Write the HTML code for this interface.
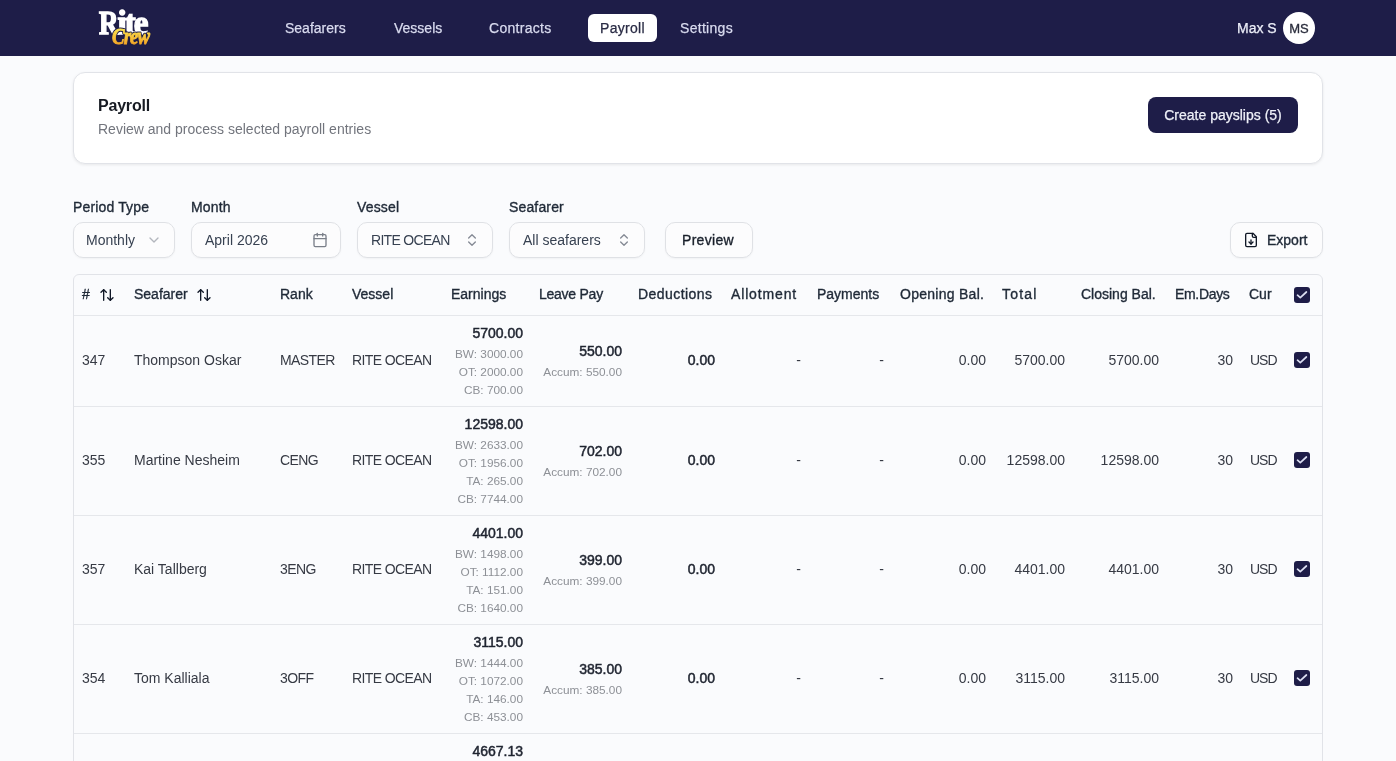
<!DOCTYPE html>
<html><head><meta charset="utf-8">
<style>
*{box-sizing:border-box;margin:0;padding:0}
html,body{width:1396px;height:761px;overflow:hidden;background:#fafbfd;-webkit-font-smoothing:antialiased;font-family:"Liberation Sans",sans-serif;color:#1f2937}
svg{display:block}
.nav{position:absolute;left:0;top:0;width:1396px;height:56px;background:#1e1d48}
.logo{position:absolute;left:96px;top:6px}
.ni{position:absolute;top:14px;height:28px;line-height:28px;font-size:14px;color:#d9dbef;-webkit-text-stroke:0.25px currentColor;padding:0 12px;border-radius:6px}
.ni.act{background:#fff;color:#2a2c45}
.user{position:absolute;left:1237px;top:19px;font-size:14px;color:#eceef8;-webkit-text-stroke:0.25px currentColor;line-height:18px}
.av{position:absolute;left:1283px;top:12px;width:32px;height:32px;border-radius:50%;background:#fff;color:#2a2d3c;font-size:13px;text-align:center;line-height:33px;-webkit-text-stroke:0.3px currentColor}
.card{position:absolute;left:73px;top:72px;width:1250px;height:92px;background:#fff;border:1px solid #e1e3e8;border-radius:12px;box-shadow:0 1px 3px rgba(0,0,0,.08)}
.ttl{position:absolute;left:98px;top:97px;font-size:16px;font-weight:bold;color:#161a22;letter-spacing:-0.2px;line-height:18px}
.sub{position:absolute;left:98px;top:120px;font-size:14px;color:#72757d;line-height:18px}
.btn{position:absolute;left:1148px;top:97px;width:150px;height:36px;background:#1e1d48;color:#eef0f8;-webkit-text-stroke:0.25px currentColor;border-radius:8px;font-size:14px;text-align:center;line-height:36px}
.lbl{position:absolute;top:199px;font-size:14px;color:#1f2937;letter-spacing:0.15px;line-height:16px;-webkit-text-stroke:0.35px #1f2937}
.sel{position:absolute;top:222px;height:36px;border:1px solid #dfe1e5;border-radius:10px;background:#fcfcfd;box-shadow:0 1px 2px rgba(0,0,0,.04);font-size:14px;color:#374151;line-height:34px}
.sel svg{position:absolute}
.tbl{position:absolute;left:73px;top:274px;width:1250px;height:520px;border:1px solid #e1e3e8;border-radius:6px;background:#fafbfd;overflow:hidden}
table{border-collapse:collapse;table-layout:fixed;width:1248px}
th{height:40px;text-align:left;font-weight:normal;font-size:14px;line-height:16px;color:#1f2937;padding:11px 8px 0;vertical-align:top;border-bottom:1px solid #e5e7eb;white-space:nowrap;-webkit-text-stroke:0.35px #1f2937}
th svg{display:inline-block;vertical-align:top;margin-top:1px}
th .cb{margin-top:1px}
td .cb{top:-1px}
th .cb svg{margin-top:0}
td{font-size:14px;color:#363a44;padding:0 8px;border-bottom:1px solid #e5e7eb;white-space:nowrap;vertical-align:middle}
td>span.t{position:relative;top:-1px}
.u{letter-spacing:-0.6px}
td.r{text-align:right}
.b{font-weight:normal;-webkit-text-stroke:0.5px currentColor;color:#1f2430;line-height:20px}
td.r>div.b{position:relative;top:-0.5px}
td.r>div.sm{position:relative;top:1px}
.sm{font-size:11.8px;color:#8d9096;line-height:18px}
.cb{display:block;width:16px;height:16px;border-radius:3px;background:#1e1d48;position:relative;margin-left:1px}
.cb svg{position:absolute;left:0;top:0}
</style></head><body><div style="position:absolute;left:0;top:0;width:1396px;height:761px;will-change:transform">
<div class="nav">
  <svg class="logo" width="70" height="50" viewBox="0 0 70 50">
    <defs><linearGradient id="cg" x1="0" y1="0" x2="0" y2="1"><stop offset="0.2" stop-color="#fde24c"/><stop offset="1" stop-color="#f0951c"/></linearGradient></defs>
    <g transform="translate(3,28)"><text transform="scale(0.82,1)" x="0" y="0" font-family="Liberation Serif" font-weight="bold" font-size="33" fill="#fff" stroke="#fff" stroke-width="1.5">R</text><text x="18.5" y="0" font-family="Liberation Serif" font-weight="bold" font-size="33" fill="#fff" stroke="#fff" stroke-width="1.4" letter-spacing="-2">ite</text></g>
    <g transform="translate(16,38) scale(1.04,1.25)"><text x="0" y="0" font-family="Liberation Serif" font-weight="bold" font-style="italic" font-size="18" fill="none" stroke="#1e1d48" stroke-width="2.4" stroke-linejoin="round" letter-spacing="-0.8">Crew</text><text x="0" y="-10" dy="10" font-family="Liberation Serif" font-weight="bold" font-style="italic" font-size="18" fill="url(#cg)" stroke="url(#cg)" stroke-width="0.7" letter-spacing="-0.8">Crew</text></g>
  </svg>
  <div class="ni" style="left:273px">Seafarers</div>
  <div class="ni" style="left:382px">Vessels</div>
  <div class="ni" style="left:477px;letter-spacing:0.3px">Contracts</div>
  <div class="ni act" style="left:588px;letter-spacing:0.3px">Payroll</div>
  <div class="ni" style="left:668px;letter-spacing:0.3px">Settings</div>
  <div class="user">Max S</div>
  <div class="av">MS</div>
</div>
<div class="card"></div>
<div class="ttl">Payroll</div>
<div class="sub">Review and process selected payroll entries</div>
<div class="btn">Create payslips (5)</div>

<div class="lbl" style="left:73px">Period Type</div>
<div class="lbl" style="left:191px">Month</div>
<div class="lbl" style="left:357px">Vessel</div>
<div class="lbl" style="left:509px">Seafarer</div>
<div class="sel" style="left:73px;width:102px;padding-left:12px">Monthly<svg style="left:72px;top:9px" width="16" height="16" viewBox="0 0 24 24" fill="none" stroke="#b3b6bd" stroke-width="2" stroke-linecap="round" stroke-linejoin="round"><path d="m6 9 6 6 6-6"/></svg></div>
<div class="sel" style="left:191px;width:150px;padding-left:13px">April 2026<svg style="left:120px;top:9px" width="16" height="16" viewBox="0 0 24 24" fill="none" stroke="#7a7f89" stroke-width="2" stroke-linecap="round" stroke-linejoin="round"><path d="M8 2v4"/><path d="M16 2v4"/><rect width="18" height="18" x="3" y="4" rx="2"/><path d="M3 10h18"/></svg></div>
<div class="sel" style="left:357px;width:136px;padding-left:13px;letter-spacing:-0.7px">RITE OCEAN<svg style="left:106px;top:9px" width="16" height="16" viewBox="0 0 24 24" fill="none" stroke="#858a94" stroke-width="2" stroke-linecap="round" stroke-linejoin="round"><path d="m7 15 5 5 5-5"/><path d="m7 9 5-5 5 5"/></svg></div>
<div class="sel" style="left:509px;width:136px;padding-left:13px">All seafarers<svg style="left:106px;top:9px" width="16" height="16" viewBox="0 0 24 24" fill="none" stroke="#858a94" stroke-width="2" stroke-linecap="round" stroke-linejoin="round"><path d="m7 15 5 5 5-5"/><path d="m7 9 5-5 5 5"/></svg></div>
<div class="sel" style="left:665px;width:88px;padding-left:16px;letter-spacing:0.3px;color:#171b24;-webkit-text-stroke:0.35px #1f2937">Preview</div>
<div class="sel" style="left:1230px;width:93px;padding-left:36px;color:#1f2937;-webkit-text-stroke:0.35px #1f2937">Export<svg style="left:12px;top:9px" width="16" height="16" viewBox="0 0 24 24" fill="none" stroke="#111827" stroke-width="2" stroke-linecap="round" stroke-linejoin="round"><path d="M15 2H6a2 2 0 0 0-2 2v16a2 2 0 0 0 2 2h12a2 2 0 0 0 2-2V7Z"/><path d="M14 2v4a2 2 0 0 0 2 2h4"/><path d="M12 18v-6"/><path d="m9 15 3 3 3-3"/></svg></div>

<div class="tbl">
<table>
<colgroup><col style="width:52px"><col style="width:146px"><col style="width:72px"><col style="width:99px"><col style="width:88px"><col style="width:99px"><col style="width:93px"><col style="width:86px"><col style="width:83px"><col style="width:102px"><col style="width:79px"><col style="width:94px"><col style="width:74px"><col style="width:44px"><col style="width:37px"></colgroup>
<thead><tr><th>#<svg style="margin-left:9px" width="16" height="16" viewBox="0 0 24 24" fill="none" stroke="#111827" stroke-width="2" stroke-linecap="round" stroke-linejoin="round"><path d="m21 16-4 4-4-4"/><path d="M17 20V4"/><path d="m3 8 4-4 4 4"/><path d="M7 4v16"/></svg></th><th>Seafarer<svg style="margin-left:8px" width="16" height="16" viewBox="0 0 24 24" fill="none" stroke="#111827" stroke-width="2" stroke-linecap="round" stroke-linejoin="round"><path d="m21 16-4 4-4-4"/><path d="M17 20V4"/><path d="m3 8 4-4 4 4"/><path d="M7 4v16"/></svg></th><th>Rank</th><th>Vessel</th><th>Earnings</th><th style="letter-spacing:-0.25px">Leave Pay</th><th style="letter-spacing:0.45px">Deductions</th><th style="letter-spacing:0.85px">Allotment</th><th>Payments</th><th style="letter-spacing:0.27px">Opening Bal.</th><th style="letter-spacing:1.2px">Total</th><th>Closing Bal.</th><th style="letter-spacing:-0.33px">Em.Days</th><th>Cur</th><th><span class="cb"><svg width="16" height="16" viewBox="0 0 16 16" fill="none" stroke="#dcdff2" stroke-width="1.7" stroke-linecap="round" stroke-linejoin="round"><path d="M3.5 8.2 6.3 10.6 12.4 5"/></svg></span></th></tr></thead>
<tbody>
<tr style="height:91px"><td><span class="t">347</span></td><td><span class="t">Thompson Oskar</span></td><td><span class="t u">MASTER</span></td><td><span class="t u">RITE OCEAN</span></td><td class="r"><div class="b">5700.00</div><div class="sm">BW: 3000.00</div><div class="sm">OT: 2000.00</div><div class="sm">CB: 700.00</div></td><td class="r"><div class="b">550.00</div><div class="sm">Accum: 550.00</div></td><td class="r b"><span class="t">0.00</span></td><td class="r"><span class="t">-</span></td><td class="r"><span class="t">-</span></td><td class="r"><span class="t">0.00</span></td><td class="r"><span class="t">5700.00</span></td><td class="r"><span class="t">5700.00</span></td><td class="r"><span class="t">30</span></td><td style="padding-left:9px"><span class="t" style="letter-spacing:-1px">USD</span></td><td><span class="cb"><svg width="16" height="16" viewBox="0 0 16 16" fill="none" stroke="#dcdff2" stroke-width="1.7" stroke-linecap="round" stroke-linejoin="round"><path d="M3.5 8.2 6.3 10.6 12.4 5"/></svg></span></td></tr>
<tr style="height:109px"><td><span class="t">355</span></td><td><span class="t">Martine Nesheim</span></td><td><span class="t u">CENG</span></td><td><span class="t u">RITE OCEAN</span></td><td class="r"><div class="b">12598.00</div><div class="sm">BW: 2633.00</div><div class="sm">OT: 1956.00</div><div class="sm">TA: 265.00</div><div class="sm">CB: 7744.00</div></td><td class="r"><div class="b">702.00</div><div class="sm">Accum: 702.00</div></td><td class="r b"><span class="t">0.00</span></td><td class="r"><span class="t">-</span></td><td class="r"><span class="t">-</span></td><td class="r"><span class="t">0.00</span></td><td class="r"><span class="t">12598.00</span></td><td class="r"><span class="t">12598.00</span></td><td class="r"><span class="t">30</span></td><td style="padding-left:9px"><span class="t" style="letter-spacing:-1px">USD</span></td><td><span class="cb"><svg width="16" height="16" viewBox="0 0 16 16" fill="none" stroke="#dcdff2" stroke-width="1.7" stroke-linecap="round" stroke-linejoin="round"><path d="M3.5 8.2 6.3 10.6 12.4 5"/></svg></span></td></tr>
<tr style="height:109px"><td><span class="t">357</span></td><td><span class="t">Kai Tallberg</span></td><td><span class="t u">3ENG</span></td><td><span class="t u">RITE OCEAN</span></td><td class="r"><div class="b">4401.00</div><div class="sm">BW: 1498.00</div><div class="sm">OT: 1112.00</div><div class="sm">TA: 151.00</div><div class="sm">CB: 1640.00</div></td><td class="r"><div class="b">399.00</div><div class="sm">Accum: 399.00</div></td><td class="r b"><span class="t">0.00</span></td><td class="r"><span class="t">-</span></td><td class="r"><span class="t">-</span></td><td class="r"><span class="t">0.00</span></td><td class="r"><span class="t">4401.00</span></td><td class="r"><span class="t">4401.00</span></td><td class="r"><span class="t">30</span></td><td style="padding-left:9px"><span class="t" style="letter-spacing:-1px">USD</span></td><td><span class="cb"><svg width="16" height="16" viewBox="0 0 16 16" fill="none" stroke="#dcdff2" stroke-width="1.7" stroke-linecap="round" stroke-linejoin="round"><path d="M3.5 8.2 6.3 10.6 12.4 5"/></svg></span></td></tr>
<tr style="height:109px"><td><span class="t">354</span></td><td><span class="t">Tom Kalliala</span></td><td><span class="t u">3OFF</span></td><td><span class="t u">RITE OCEAN</span></td><td class="r"><div class="b">3115.00</div><div class="sm">BW: 1444.00</div><div class="sm">OT: 1072.00</div><div class="sm">TA: 146.00</div><div class="sm">CB: 453.00</div></td><td class="r"><div class="b">385.00</div><div class="sm">Accum: 385.00</div></td><td class="r b"><span class="t">0.00</span></td><td class="r"><span class="t">-</span></td><td class="r"><span class="t">-</span></td><td class="r"><span class="t">0.00</span></td><td class="r"><span class="t">3115.00</span></td><td class="r"><span class="t">3115.00</span></td><td class="r"><span class="t">30</span></td><td style="padding-left:9px"><span class="t" style="letter-spacing:-1px">USD</span></td><td><span class="cb"><svg width="16" height="16" viewBox="0 0 16 16" fill="none" stroke="#dcdff2" stroke-width="1.7" stroke-linecap="round" stroke-linejoin="round"><path d="M3.5 8.2 6.3 10.6 12.4 5"/></svg></span></td></tr>
<tr style="height:109px"><td></td><td></td><td></td><td></td><td class="r" style="vertical-align:top;padding-top:8px"><div class="b">4667.13</div></td><td></td><td></td><td></td><td></td><td></td><td></td><td></td><td></td><td></td><td></td></tr>
</tbody></table>
</div>
</div></body></html>
